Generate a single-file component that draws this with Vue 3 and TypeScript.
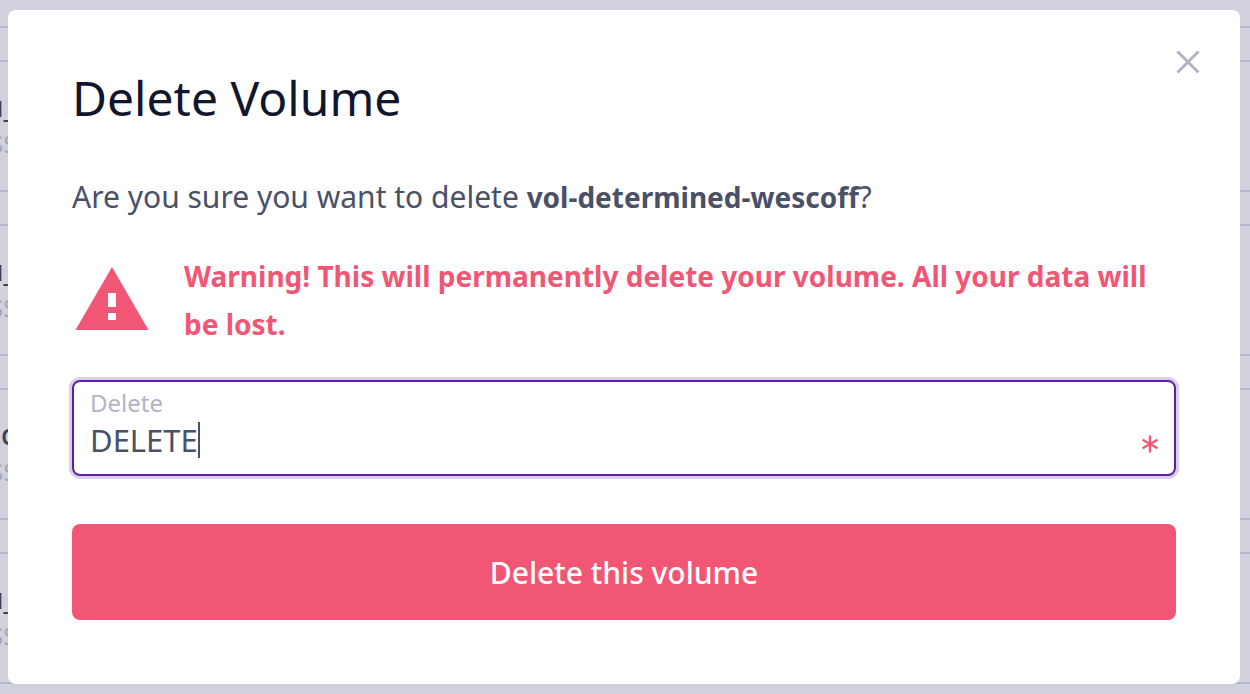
<script setup lang="ts">
import { ref } from 'vue'

interface VolumeRow {
  name: string
  state: string
}

const rows: VolumeRow[] = [
  { name: 'u_', state: 'SS' },
  { name: 'u_', state: 'SS' },
  { name: 'c', state: 'SS' },
  { name: 'u_', state: 'SS' },
]

const volumeName = 'vol-determined-wescoff'
const confirmation = ref('DELETE')
const open = ref(true)
</script>

<template>
  <div class="page">
    <div class="list" aria-hidden="true">
      <div class="row row-first"></div>
      <div v-for="(row, index) in rows" :key="index" class="row">
        <span class="name" :class="{ short: row.name.length === 1 }">{{ row.name }}</span>
        <span class="state">{{ row.state }}</span>
      </div>
    </div>

    <div v-if="open" class="overlay">
      <section class="modal" role="dialog" aria-modal="true" aria-labelledby="modal-title">
        <button class="close" type="button" aria-label="Close" @click="open = false">
          <svg viewBox="0 0 24 24" width="24" height="24">
            <path d="M1.500 1.500 22.500 22.500M22.500 1.500 1.500 22.500" fill="none" stroke="currentColor" stroke-width="3" />
          </svg>
        </button>

        <h1 id="modal-title">Delete Volume</h1>
        <p class="question">Are you sure you want to delete <strong>{{ volumeName }}</strong>?</p>

        <div class="warning">
          <svg class="warning-icon" viewBox="0 0 80 72" width="80" height="72" aria-hidden="true">
            <path fill="currentColor" fill-rule="evenodd" d="M40 3 76.500 66H3.500ZM36 29V43H44V29ZM36 49V56H44V49Z" />
          </svg>
          <p>Warning! This will permanently delete your volume. All your data will be lost.</p>
        </div>

        <form @submit.prevent="open = false">
          <div class="field">
            <label for="confirmation">Delete</label>
            <div class="entry">
              <input id="confirmation" v-model="confirmation" type="text" autocomplete="off" required />
              <span class="caret"></span>
              <svg class="required" viewBox="0 0 16 18" width="16" height="18" aria-hidden="true">
                <path d="M8 .5V17.500M.500 4.700 15.500 13.300M15.500 4.700 .500 13.300" fill="none" stroke="currentColor" stroke-width="2.400" />
              </svg>
            </div>
          </div>
          <button class="submit" type="submit">Delete this volume</button>
        </form>
      </section>
    </div>
  </div>
</template>

<style>
body {
  margin: 0;
  background: #d1d1dd;
}
</style>

<style scoped>
.page {
  position: relative;
  min-height: 100vh;
  overflow: hidden;
  font-family: "Noto Sans", "Open Sans", sans-serif;
  color: #4a5066;
}

.list {
  position: absolute;
  inset: 0;
  display: flex;
  flex-direction: column;
  gap: 32px;
  overflow: hidden;
}

.row {
  box-sizing: border-box;
  display: flex;
  flex: none;
  flex-direction: column;
  height: 132px;
  padding-top: 26px;
  border-top: 2px solid #b3b8d1;
  border-bottom: 2px solid #b3b8d1;
  line-height: 36px;
}

.row-first {
  height: 28px;
  padding: 0;
  border-top: 0;
}

.name {
  margin-left: -14px;
  font-size: 28px;
  font-weight: 500;
  color: #3c3f58;
}

.name.short {
  margin-left: 1px;
}

.state {
  margin-top: 2px;
  margin-left: -10px;
  font-size: 24px;
  color: #a3a6bb;
}

.overlay {
  position: relative;
  padding: 10px 10px 10px 8px;
}

.modal {
  position: relative;
  padding: 56px 64px 64px;
  border-radius: 8px;
  background: #fff;
}

.close {
  position: absolute;
  top: 40px;
  right: 40px;
  display: flex;
  padding: 0;
  border: 0;
  background: none;
  color: #b1b4c5;
  cursor: pointer;
}

h1 {
  margin: 0;
  font-size: 48px;
  font-weight: 400;
  line-height: 64px;
  color: #12162d;
}

p {
  margin: 0;
  font-size: 30px;
  line-height: 48px;
}

.question {
  margin-top: 43px;
}

.question strong {
  font-size: 28px;
}

.warning {
  display: flex;
  align-items: center;
  gap: 32px;
  margin-top: 31px;
  color: #f15775;
  font-weight: 700;
}

.warning p {
  font-size: 28px;
}

.warning-icon {
  flex: none;
}

.field {
  box-sizing: border-box;
  margin-top: 32px;
  padding: 5px 16px 0;
  height: 96px;
  border: 2px solid #5b1fa0;
  border-radius: 8px;
  box-shadow: 0 0 0 3px #dacdec;
}

label {
  display: block;
  font-size: 24px;
  line-height: 32px;
  color: #b1b4c5;
}

.entry {
  display: flex;
  align-items: center;
  height: 42px;
}

input {
  field-sizing: content;
  min-width: 0;
  padding: 0;
  border: 0;
  outline: 0;
  background: none;
  font: inherit;
  font-size: 31px;
  line-height: 42px;
  color: #4a5066;
  caret-color: transparent;
}

.caret {
  flex: none;
  width: 2px;
  height: 36px;
  background: #4a5066;
}

.required {
  margin-top: 8px;
  margin-left: auto;
  color: #f15775;
}

.submit {
  display: block;
  width: 100%;
  height: 96px;
  margin-top: 48px;
  padding: 0;
  border: 0;
  border-radius: 8px;
  background: #f15775;
  color: #fff;
  font: inherit;
  font-size: 30px;
  font-weight: 500;
  cursor: pointer;
}
</style>
